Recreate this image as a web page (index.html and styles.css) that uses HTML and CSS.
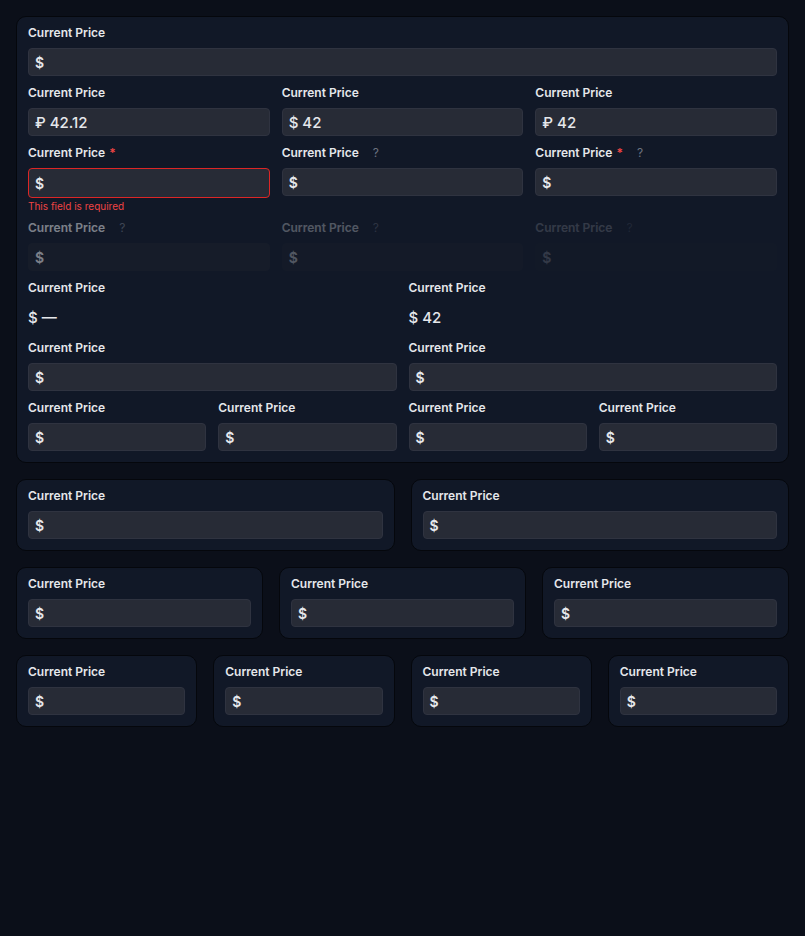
FILE: index.html
```html
<!DOCTYPE html>
<html lang="en">

<head>
    <meta charset="UTF-8">
    <meta name="viewport" content="width=device-width, initial-scale=1.0">
    <title>Price fields</title>
    <link rel="stylesheet" href="styles.css">
</head>

<body>
    <div class="card big">
        <div class="row">
            <div class="field">
                <div class="label">Current Price</div>
                <div class="input">$</div>
            </div>
        </div>
        <div class="row">
            <div class="field">
                <div class="label">Current Price</div>
                <div class="input value">&#8381; 42.12</div>
            </div>
            <div class="field">
                <div class="label">Current Price</div>
                <div class="input value">$ 42</div>
            </div>
            <div class="field">
                <div class="label">Current Price</div>
                <div class="input value">&#8381; 42</div>
            </div>
        </div>
        <div class="row">
            <div class="field">
                <div class="label">Current Price <span class="req">*</span></div>
                <div class="input error">$</div>
                <div class="error_text">This field is required</div>
            </div>
            <div class="field">
                <div class="label">Current Price <span class="help">?</span></div>
                <div class="input">$</div>
            </div>
            <div class="field">
                <div class="label">Current Price <span class="req">*</span> <span class="help">?</span></div>
                <div class="input">$</div>
            </div>
        </div>
        <div class="row">
            <div class="field disabled d1">
                <div class="label">Current Price <span class="help">?</span></div>
                <div class="input">$</div>
            </div>
            <div class="field disabled d2">
                <div class="label">Current Price <span class="help">?</span></div>
                <div class="input">$</div>
            </div>
            <div class="field disabled d3">
                <div class="label">Current Price <span class="help">?</span></div>
                <div class="input">$</div>
            </div>
        </div>
        <div class="row">
            <div class="field">
                <div class="label">Current Price</div>
                <div class="static">$ &mdash;</div>
            </div>
            <div class="field">
                <div class="label">Current Price</div>
                <div class="static">$ 42</div>
            </div>
        </div>
        <div class="row">
            <div class="field">
                <div class="label">Current Price</div>
                <div class="input">$</div>
            </div>
            <div class="field">
                <div class="label">Current Price</div>
                <div class="input">$</div>
            </div>
        </div>
        <div class="row">
            <div class="field">
                <div class="label">Current Price</div>
                <div class="input">$</div>
            </div>
            <div class="field">
                <div class="label">Current Price</div>
                <div class="input">$</div>
            </div>
            <div class="field">
                <div class="label">Current Price</div>
                <div class="input">$</div>
            </div>
            <div class="field">
                <div class="label">Current Price</div>
                <div class="input">$</div>
            </div>
        </div>
    </div>

    <div class="cards">
        <div class="card field">
            <div class="label">Current Price</div>
            <div class="input">$</div>
        </div>
        <div class="card field">
            <div class="label">Current Price</div>
            <div class="input">$</div>
        </div>
    </div>
    <div class="cards">
        <div class="card field">
            <div class="label">Current Price</div>
            <div class="input">$</div>
        </div>
        <div class="card field">
            <div class="label">Current Price</div>
            <div class="input">$</div>
        </div>
        <div class="card field">
            <div class="label">Current Price</div>
            <div class="input">$</div>
        </div>
    </div>
    <div class="cards">
        <div class="card field">
            <div class="label">Current Price</div>
            <div class="input">$</div>
        </div>
        <div class="card field">
            <div class="label">Current Price</div>
            <div class="input">$</div>
        </div>
        <div class="card field">
            <div class="label">Current Price</div>
            <div class="input">$</div>
        </div>
        <div class="card field">
            <div class="label">Current Price</div>
            <div class="input">$</div>
        </div>
    </div>
</body>

</html>
```

FILE: styles.css
```css
body {
    margin: 0;
    padding: 16px;
    background-color: #0b0f19;
    font-family: Inter, "Liberation Sans", sans-serif;
    color: #e5e7eb;
}

.card {
    background-color: #111827;
    border: 1px solid #05070c;
    border-radius: 10px;
    padding: 11px;
}

.big {
    display: flex;
    flex-direction: column;
    gap: 12px;
}

.row {
    display: flex;
    gap: 12px;
}

.field {
    flex: 1;
    min-width: 0;
    display: flex;
    flex-direction: column;
}

.label {
    font-size: 12px;
    font-weight: 600;
    line-height: 10px;
    margin-bottom: 10px;
    color: #e5e7eb;
    white-space: nowrap;
}

.req {
    color: #ef4444;
    margin-left: 1px;
}

.help {
    color: #6b7280;
    font-weight: 400;
    margin-left: 11px;
}

.input {
    height: 28px;
    box-sizing: border-box;
    background-color: #272b36;
    border: 1px solid #2f3340;
    border-radius: 4px;
    padding: 0 6px;
    display: flex;
    align-items: center;
    font-size: 14px;
    font-weight: 600;
    color: #e5e7eb;
}

.value {
    font-size: 15px;
    font-weight: 500;
}

.error {
    height: 30px;
    border-color: #dc2626;
}

.error_text {
    font-size: 10px;
    color: #ef4444;
    margin-top: 3px;
    line-height: 10px;
}

.static {
    font-size: 15px;
    font-weight: 500;
    height: 28px;
    display: flex;
    align-items: center;
}

.disabled .input {
    background-color: #1c212c;
    border-color: #1c212c;
}

.d1 {
    opacity: 0.5;
}

.d2 {
    opacity: 0.3;
}

.d3 {
    opacity: 0.16;
}

.cards {
    display: flex;
    gap: 16px;
    margin-top: 16px;
}

.cards .card {
    flex: 1;
}
```
